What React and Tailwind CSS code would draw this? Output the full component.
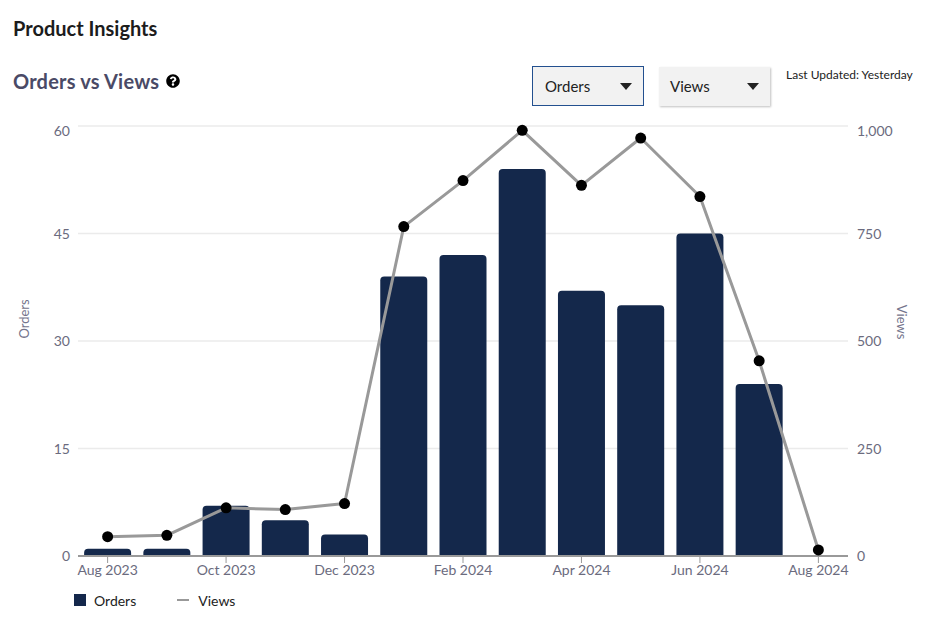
import React from "react";
import { FaQuestionCircle } from "react-icons/fa";

const orders = [1, 1, 7, 5, 3, 39, 42, 54, 37, 35, 45, 24, 0];
const views = [45, 48, 112, 108, 122, 766, 873, 990, 862, 972, 836, 454, 14];
const X0 = 78;
const X1 = 848;
const Y0 = 556;
const H = 430;
const slot = (X1 - X0) / 13;
const cx = (i) => X0 + slot * (i + 0.5);
const yO = (v) => Y0 - (v * H) / 60;
const yV = (v) => Y0 - (v * H) / 1000;

function barPath(x, y, w, h, r) {
  if (h <= 0) return "";
  const rr = Math.min(r, h);
  return `M${x},${Y0} L${x},${y + rr} Q${x},${y} ${x + rr},${y} L${x + w - rr},${y} Q${x + w},${y} ${x + w},${y + rr} L${x + w},${Y0} Z`;
}

function Caret() {
  return (
    <svg width="12" height="7" viewBox="0 0 12 7">
      <path d="M0 0 L12 0 L6 7 Z" fill="#222" />
    </svg>
  );
}

function Chart() {
  const leftTicks = [0, 15, 30, 45, 60];
  const rightTicks = ["0", "250", "500", "750", "1,000"];
  const xLabels = [
    [0, "Aug 2023"],
    [2, "Oct 2023"],
    [4, "Dec 2023"],
    [6, "Feb 2024"],
    [8, "Apr 2024"],
    [10, "Jun 2024"],
    [12, "Aug 2024"],
  ];
  const bw = 47;
  const linePts = views.map((v, i) => `${cx(i)},${yV(v)}`).join(" ");
  return (
    <svg width="938" height="484" viewBox="0 106 938 484" className="block">
      {leftTicks.map((t) =>
        t === 0 ? null : (
          <line key={t} x1={X0} x2={X1} y1={yO(t)} y2={yO(t)} stroke="#ebebeb" strokeWidth="1.5" />
        )
      )}
      {leftTicks.map((t, k) => (
        <text key={"l" + t} x="70" y={yO(t) + (k === 4 ? 10 : 5)} textAnchor="end" fontSize="14" fill="#6b6b7e">
          {t}
        </text>
      ))}
      {rightTicks.map((t, k) => (
        <text key={"r" + t} x="857" y={Y0 - k * (H / 4) + (k === 4 ? 10 : 5)} textAnchor="start" fontSize="14" fill="#6b6b7e">
          {t}
        </text>
      ))}
      <text
        x="0"
        y="0"
        transform="translate(29 319) rotate(-90)"
        textAnchor="middle"
        fontSize="13"
        fill="#74748c"
      >
        Orders
      </text>
      <text
        x="0"
        y="0"
        transform="translate(897 322) rotate(90)"
        textAnchor="middle"
        fontSize="13"
        fill="#74748c"
      >
        Views
      </text>
      {orders.map((o, i) => {
        const y = yO(o);
        return <path key={i} d={barPath(cx(i) - bw / 2, y, bw, Y0 - y, 4)} fill="#14284b" />;
      })}
      <line x1={X0} x2={X1} y1={Y0} y2={Y0} stroke="#999" strokeWidth="2" />
      {xLabels.map(([i, l]) => (
        <g key={l}>
          <line x1={cx(i)} x2={cx(i)} y1={Y0} y2={Y0 + 7} stroke="#999" strokeWidth="1" />
          <text x={cx(i)} y={Y0 + 19} textAnchor="middle" fontSize="14" fill="#6b6b7e">
            {l}
          </text>
        </g>
      ))}
      <polyline points={linePts} fill="none" stroke="#999999" strokeWidth="3" strokeLinejoin="round" />
      {views.map((v, i) => (
        <circle key={i} cx={cx(i)} cy={yV(v)} r="5.5" fill="#000" />
      ))}
    </svg>
  );
}

export default function App() {
  return (
    <div
      className="w-[938px] h-[640px] bg-white overflow-hidden"
      style={{ fontFamily: "Lato, 'Open Sans', sans-serif" }}
    >
      <div className="pt-[16px] px-[13px] text-[20px] leading-[24px] font-bold text-[#1c1c1c]">
        Product Insights
      </div>
      <div className="flex items-start mt-[26px] h-[40px]">
        <div className="flex items-center gap-[7px] pl-[13px] mt-[3px] w-[532px]">
          <span className="text-[20px] leading-[24px] font-bold text-[#4a4a66] tracking-[0.2px]">Orders vs Views</span>
          <FaQuestionCircle className="text-black" size={14} />
        </div>
        <div className="flex items-center justify-between w-[112px] h-[40px] border border-[#23508f] bg-[#f2f2f2] pl-[12px] pr-[11px]">
          <span className="text-[15px] text-[#222]">Orders</span>
          <Caret />
        </div>
        <div className="flex items-center justify-between w-[111px] h-[39px] ml-[15px] mt-[1px] bg-[#f2f2f2] pl-[11px] pr-[11px] shadow-[1px_1px_2px_rgba(0,0,0,0.25)]">
          <span className="text-[15px] text-[#222]">Views</span>
          <Caret />
        </div>
        <div className="ml-[16px] mt-[1px] text-[12px] leading-[16px] text-[#222]">Last Updated: Yesterday</div>
      </div>
      <Chart />
      <div className="flex items-center h-[20px] pl-[74px] text-[14px] text-[#222]">
        <span className="w-[12px] h-[12px] bg-[#14284b]"></span>
        <span className="ml-[8px]">Orders</span>
        <span className="ml-[41px] w-[12px] h-[2px] bg-[#999]"></span>
        <span className="ml-[9px]">Views</span>
      </div>
    </div>
  );
}
